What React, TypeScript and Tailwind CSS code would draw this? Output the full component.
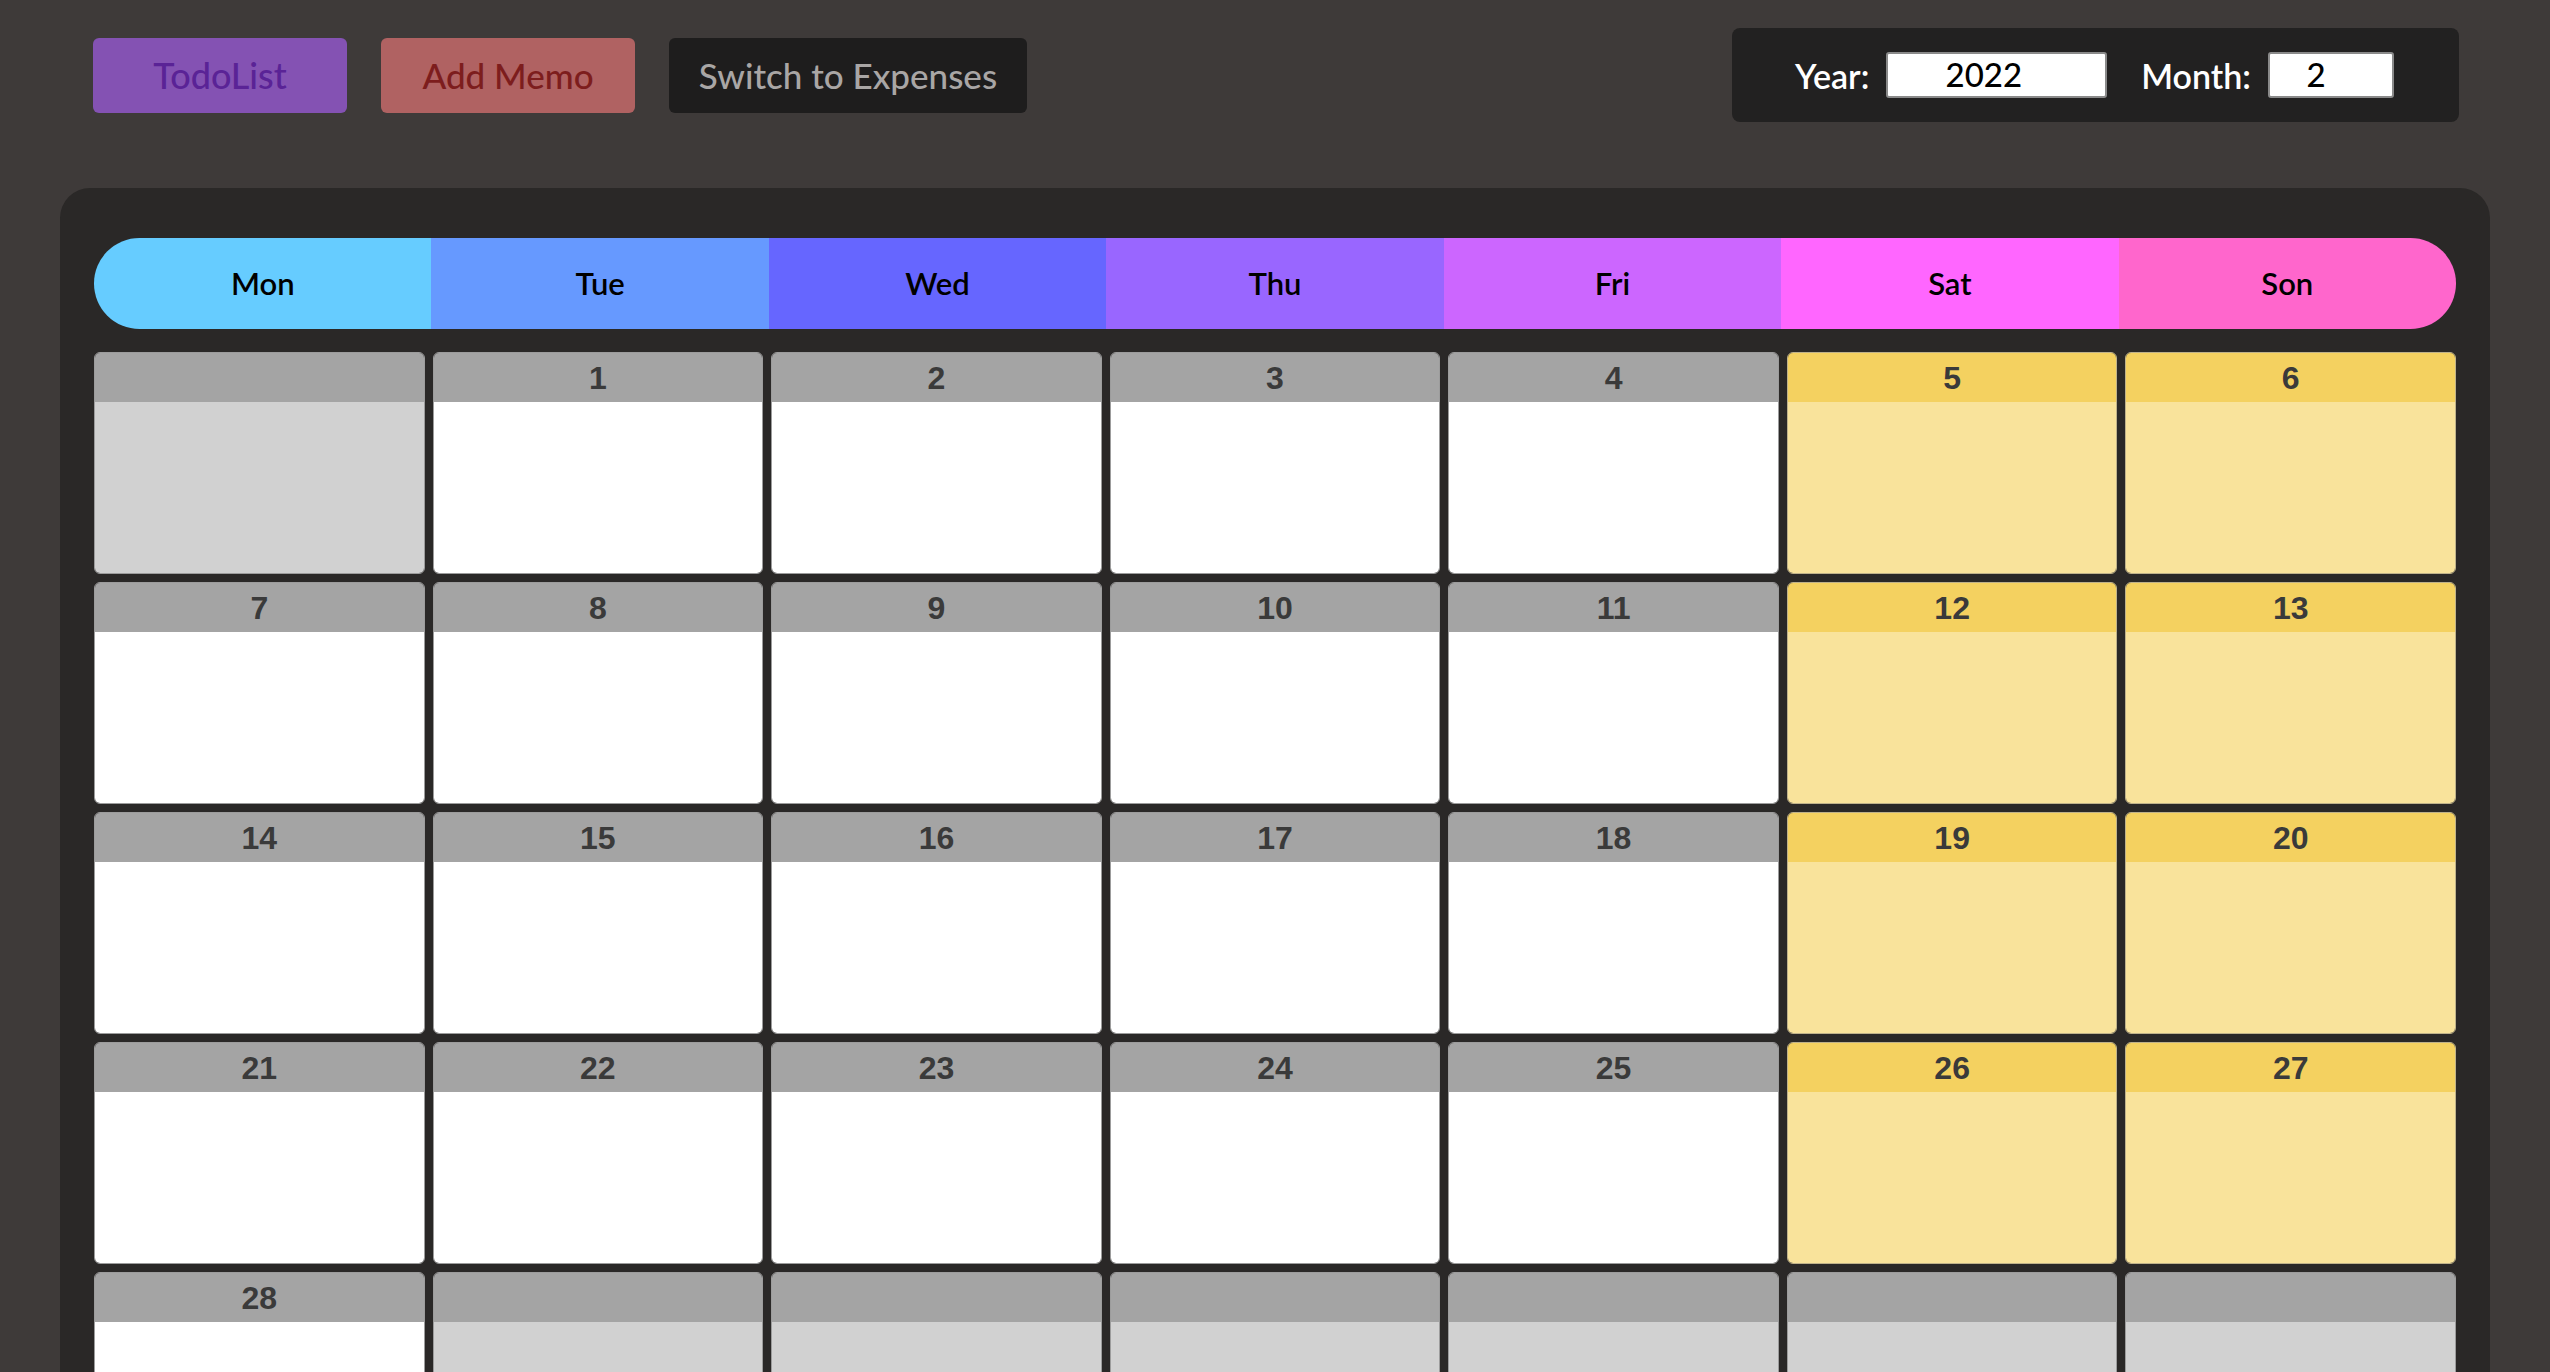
import React from 'react';

const days = [
  { name: 'Mon', color: 'bg-[#66ccff]' },
  { name: 'Tue', color: 'bg-[#6699ff]' },
  { name: 'Wed', color: 'bg-[#6666ff]' },
  { name: 'Thu', color: 'bg-[#9966ff]' },
  { name: 'Fri', color: 'bg-[#cc66ff]' },
  { name: 'Sat', color: 'bg-[#ff66ff]' },
  { name: 'Son', color: 'bg-[#ff66cc]' },
];

// February 2022 starts on a Tuesday
const buildCells = (year: number, month: number) => {
  const first = new Date(year, month - 1, 1).getDay();
  const offset = (first + 6) % 7;
  const total = new Date(year, month, 0).getDate();
  const cells: (number | null)[] = [];
  for (let i = 0; i < offset; i++) cells.push(null);
  for (let d = 1; d <= total; d++) cells.push(d);
  while (cells.length % 7 !== 0) cells.push(null);
  return cells;
};

const DayCell = ({ day, weekend }: { day: number | null; weekend: boolean }) => {
  const empty = day === null;
  const head = empty ? 'bg-[#a4a4a4]' : weekend ? 'bg-[#f4d160]' : 'bg-[#a4a4a4]';
  const body = empty ? 'bg-[#d1d1d1]' : weekend ? 'bg-[#f9e39b]' : 'bg-white';
  const border = weekend && !empty ? 'border-[#bfb28a]' : 'border-[#9c9c9c]';
  return (
    <div className={`flex h-[222px] flex-col overflow-hidden rounded-[6px] border ${border}`}>
      <div className={`flex h-[49px] items-center justify-center font-['Liberation_Sans',Arial,sans-serif] text-[32px] font-bold text-[#3a3a3a] ${head}`}>
        {day ?? ''}
      </div>
      <div className={`flex-1 ${body}`} />
    </div>
  );
};

export default function App() {
  const year = 2022;
  const month = 2;
  const cells = buildCells(year, month);

  return (
    <div className="min-h-screen bg-[#3e3a39] pb-[60px] font-['Lato','Liberation_Sans',sans-serif]">
      <div className="flex items-center justify-between pl-[93px] pr-[91px] pt-[28px]">
        <div className="flex gap-[34px]">
          <button className="h-[75px] w-[254px] rounded-[6px] bg-[#8452b3] text-[36px] font-medium text-[#5a2396]">
            TodoList
          </button>
          <button className="h-[75px] w-[254px] rounded-[6px] bg-[#b06262] text-[35px] font-medium text-[#7d1d1d]">
            Add Memo
          </button>
          <button className="h-[75px] w-[358px] rounded-[6px] bg-[#1e1d1d] text-[35px] font-medium text-[#a9a6a5]">
            Switch to Expenses
          </button>
        </div>
        <div className="flex h-[94px] items-center rounded-[8px] bg-[#222121] pl-[63px] pr-[65px]">
          <span className="text-[34px] font-semibold text-white">Year:</span>
          <input
            readOnly
            value={year}
            className="ml-[17px] h-[46px] w-[221px] rounded-[3px] border-2 border-[#8a8a8a] bg-white pr-[26px] text-center text-[33px] font-medium text-black outline-none"
          />
          <span className="ml-[34px] text-[34px] font-semibold text-white">Month:</span>
          <input
            readOnly
            value={month}
            className="ml-[17px] h-[46px] w-[126px] rounded-[3px] border-2 border-[#8a8a8a] bg-white pr-[30px] text-center text-[33px] font-medium text-black outline-none"
          />
        </div>
      </div>

      <div className="mx-[60px] mt-[66px] rounded-[30px] bg-[#2a2827] px-[34px] pb-[40px] pt-[50px]">
        <div className="grid h-[91px] grid-cols-7 overflow-hidden rounded-full">
          {days.map((d) => (
            <div key={d.name} className={`flex items-center justify-center text-[31px] font-semibold text-black ${d.color}`}>
              {d.name}
            </div>
          ))}
        </div>
        <div className="mt-[23px] grid grid-cols-7 gap-[8px]">
          {cells.map((day, i) => (
            <DayCell key={i} day={day} weekend={i % 7 >= 5} />
          ))}
        </div>
      </div>
    </div>
  );
}
